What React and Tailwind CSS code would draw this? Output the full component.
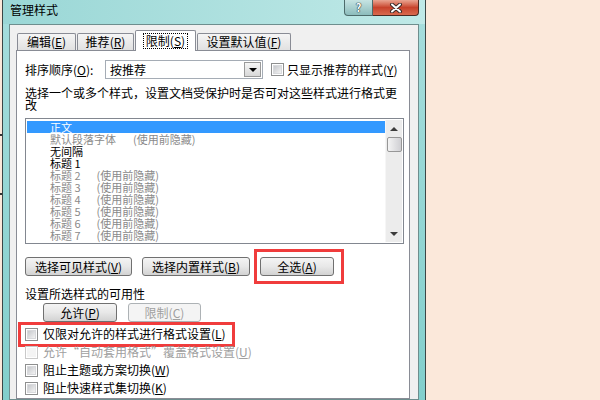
import React from 'react';

const F = "font-['Noto_Sans_CJK_SC',sans-serif]";

// 带下划线助记符的 (X)
function Key({ k }) {
  return (
    <span>
      (<span className="underline underline-offset-[1px]">{k}</span>)
    </span>
  );
}

function Btn({ label, k, w, disabled }) {
  return (
    <div
      className={`${w} h-[19px] rounded-[3px] border flex items-center justify-center ${
        disabled
          ? 'border-[#adb2b5] bg-[#f4f4f4] text-[#a0a0a0]'
          : 'border-[#707070] bg-gradient-to-b from-[#f4f4f4] via-[#e8e8e8] to-[#d2d2d2] text-black'
      }`}
    >
      {label}
      <Key k={k} />
    </div>
  );
}

function Box({ disabled }) {
  return (
    <div
      className={`w-[13px] h-[13px] border flex items-center justify-center bg-white ${
        disabled ? 'border-[#c9c9c9]' : 'border-[#8e8f8f]'
      }`}
    >
      <div
        className={`w-[9px] h-[9px] ${
          disabled
            ? 'bg-[#f4f4f4]'
            : 'bg-gradient-to-br from-[#c6c8cc] to-[#f3f3f3] border border-[#d8d9dc]'
        }`}
      />
    </div>
  );
}

function Check({ label, k, disabled, children }) {
  return (
    <div className="relative h-[18px] flex items-center">
      <Box disabled={disabled} />
      <span className={`ml-[5px] ${disabled ? 'text-[#a0a0a0]' : ''}`}>
        {label}
        <Key k={k} />
      </span>
      {children}
    </div>
  );
}

const rows = [
  { name: '正文', sel: true },
  { name: '默认段落字体', note: '(使用前隐藏)', gray: true, noteCls: 'ml-[17px]' },
  { name: '无间隔' },
  { name: '标题 1' },
  { name: '标题 2', note: '(使用前隐藏)', gray: true, noteCls: 'ml-[16px]' },
  { name: '标题 3', note: '(使用前隐藏)', gray: true, noteCls: 'ml-[16px]' },
  { name: '标题 4', note: '(使用前隐藏)', gray: true, noteCls: 'ml-[16px]' },
  { name: '标题 5', note: '(使用前隐藏)', gray: true, noteCls: 'ml-[16px]' },
  { name: '标题 6', note: '(使用前隐藏)', gray: true, noteCls: 'ml-[16px]' },
  { name: '标题 7', note: '(使用前隐藏)', gray: true, noteCls: 'ml-[16px]' },
];

export default function App() {
  return (
    <div className={`w-[600px] h-[400px] overflow-hidden flex bg-[#fbe8da] ${F} text-[12px] leading-[12px] text-black`}>
      {/* 左边缘残留 */}
      <div className="w-[2px] flex flex-col">
        <div className="mt-[134px] h-[2px] bg-[#333]" />
        <div className="mt-[57px] h-[2px] bg-[#333]" />
      </div>

      {/* 对话框窗口 */}
      <div className="w-[424px] h-full flex flex-col border-x border-[#3b4646] bg-gradient-to-b from-[#a6dedd] to-[#82cfcc]">
        {/* 标题栏 */}
        <div className="h-[24px] flex items-start bg-gradient-to-r from-[#9ad7d6] to-[#bfe9e7]">
          <span className="ml-[7px] mt-[3px] text-[12px] leading-[13px]">管理样式</span>
          <div className="flex-1" />
          <div className="flex mr-[6px] h-[16px]">
            <div className="w-[29px] h-full rounded-bl-[4px] border border-t-0 border-[#4d6b6b] bg-gradient-to-b from-[#c6e4e3] to-[#8cbcbc] flex items-center justify-center text-white font-bold text-[11px] leading-[11px] [text-shadow:0_0_1px_#2a3a3a,0_0_1px_#2a3a3a,0_0_1px_#2a3a3a]">
              ?
            </div>
            <div className="w-[46px] h-full rounded-br-[4px] border border-t-0 border-l-0 border-[#4a2a22] bg-gradient-to-b from-[#e9a592] via-[#c7422b] to-[#d9694e] flex items-center justify-center">
              <svg width="14" height="10" viewBox="0 0 14 10">
                <path d="M3 1.5 L11 8.5 M11 1.5 L3 8.5" stroke="#3a2a28" strokeWidth="4" strokeLinecap="round" />
                <path d="M3 1.5 L11 8.5 M11 1.5 L3 8.5" stroke="#ffffff" strokeWidth="2" strokeLinecap="round" />
              </svg>
            </div>
          </div>
        </div>

        {/* 客户区 */}
        <div className="flex-1 mx-[6px] border border-[#6e8e8e] bg-[#f0f0f0] flex flex-col">
          {/* 选项卡 */}
          <div className="mt-[6px] pl-[7px] h-[19px] flex items-end">
            <div className="w-[59px] h-[17px] border border-b-0 border-[#898c95] rounded-t-[2px] bg-gradient-to-b from-[#f5f5f5] to-[#e1e1e1] flex items-center justify-center">
              编辑<Key k="E" />
            </div>
            <div className="ml-[1px] w-[57px] h-[17px] border border-b-0 border-[#898c95] rounded-t-[2px] bg-gradient-to-b from-[#f5f5f5] to-[#e1e1e1] flex items-center justify-center">
              推荐<Key k="R" />
            </div>
            <div className="relative z-10 -mb-px ml-[1px] w-[61px] h-[21px] border border-b-0 border-[#898c95] rounded-t-[2px] bg-white flex items-center justify-center">
              <span className="border border-dotted border-black px-[2px] py-[1px]">
                限制<Key k="S" />
              </span>
            </div>
            <div className="ml-[1px] w-[94px] h-[17px] border border-b-0 border-[#898c95] rounded-t-[2px] bg-gradient-to-b from-[#f5f5f5] to-[#e1e1e1] flex items-center justify-center">
              设置默认值<Key k="F" />
            </div>
          </div>

          {/* 选项卡面板 */}
          <div className="flex-1 ml-[6px] w-[394px] bg-white border border-[#898c95] pl-[8px] pt-[9px] flex flex-col">
            <div className="h-[19px] flex items-center">
              <span className="w-[80px]">
                排序顺序<Key k="O" />:
              </span>
              <div className="w-[158px] h-[19px] border border-[#a5acb5] flex items-center">
                <span className="flex-1 pl-[4px]">按推荐</span>
                <div className="w-[17px] h-[15px] mr-[1px] border border-[#9a9a9a] bg-gradient-to-b from-[#f6f6f6] to-[#d8d8d8] flex items-center justify-center">
                  <div className="w-0 h-0 border-l-[4px] border-r-[4px] border-t-[4px] border-l-transparent border-r-transparent border-t-black" />
                </div>
              </div>
              <div className="ml-[8px]">
                <Box />
              </div>
              <span className="ml-[3px]">
                只显示推荐的样式<Key k="Y" />
              </span>
            </div>

            <div className="mt-[8px] leading-[12px]">
              <div>选择一个或多个样式，设置文档受保护时是否可对这些样式进行格式更</div>
              <div>改</div>
            </div>

            {/* 样式列表 */}
            <div className="mt-[7px] w-[379px] h-[126px] border border-[#828790] flex">
              <div className="flex-1 pt-[2px] pl-[1px] flex flex-col">
                {rows.map((r) => (
                  <div
                    key={r.name}
                    className={`h-[12px] text-[11px] leading-[12px] pl-[23px] whitespace-nowrap ${
                      r.sel ? 'bg-[#3399ff] text-white' : r.gray ? 'text-[#8a8a8a]' : 'text-black'
                    }`}
                  >
                    <span>{r.name}</span>
                    {r.note && <span className={r.noteCls}>{r.note}</span>}
                  </div>
                ))}
              </div>
              <div className="w-[17px] my-[1px] mr-[1px] bg-[#ececec] border-l border-[#f6f6f6] flex flex-col items-center">
                <div className="h-[17px] flex items-center justify-center">
                  <div className="w-0 h-0 border-l-[4px] border-r-[4px] border-b-[4px] border-l-transparent border-r-transparent border-b-[#3c3c3c]" />
                </div>
                <div className="w-[15px] h-[15px] rounded-[2px] border border-[#979797] bg-gradient-to-r from-[#f4f4f4] to-[#cfcfd3]" />
                <div className="flex-1" />
                <div className="h-[17px] flex items-center justify-center">
                  <div className="w-0 h-0 border-l-[4px] border-r-[4px] border-t-[4px] border-l-transparent border-r-transparent border-t-[#3c3c3c]" />
                </div>
              </div>
            </div>

            {/* 选择按钮 */}
            <div className="mt-[13px] flex items-center">
              <Btn label="选择可见样式" k="V" w="w-[107px]" />
              <div className="ml-[10px]">
                <Btn label="选择内置样式" k="B" w="w-[108px]" />
              </div>
              <div className="relative ml-[10px]">
                <Btn label="全选" k="A" w="w-[74px]" />
                <span className="absolute left-[-6px] top-[-8px] w-[90px] h-[35px] border-[3px] border-[#f03c3c]" />
              </div>
            </div>

            <div className="mt-[12px]">设置所选样式的可用性</div>

            <div className="mt-[3px] flex items-center">
              <div className="ml-[18px]">
                <Btn label="允许" k="P" w="w-[74px]" />
              </div>
              <div className="ml-[11px]">
                <Btn label="限制" k="C" w="w-[73px]" disabled />
              </div>
            </div>

            <div className="mt-[3px] flex flex-col">
              <Check label="仅限对允许的样式进行格式设置" k="L">
                <span className="absolute left-[-7px] top-[-3px] w-[217px] h-[25px] border-[3px] border-[#f03c3c]" />
              </Check>
              <Check label="允许“自动套用格式”覆盖格式设置" k="U" disabled />
              <Check label="阻止主题或方案切换" k="W" />
              <Check label="阻止快速样式集切换" k="K" />
            </div>
          </div>
        </div>
      </div>
    </div>
  );
}
